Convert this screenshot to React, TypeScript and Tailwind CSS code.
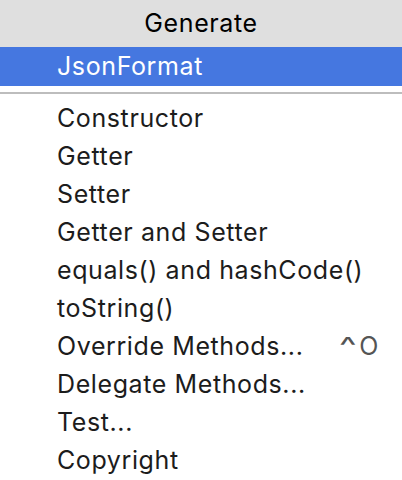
import React from "react";

const items: { label: string; shortcut?: boolean }[] = [
  { label: "Constructor" },
  { label: "Getter" },
  { label: "Setter" },
  { label: "Getter and Setter" },
  { label: "equals() and hashCode()" },
  { label: "toString()" },
  { label: "Override Methods...", shortcut: true },
  { label: "Delegate Methods..." },
  { label: "Test..." },
  { label: "Copyright" },
];

export default function App() {
  return (
    <div
      className="w-[402px] h-[480px] bg-white overflow-hidden text-[25px] tracking-[0.6px] text-[#1c1c1c]"
      style={{ fontFamily: "Inter, 'Liberation Sans', sans-serif" }}
    >
      <div className="h-[47px] bg-[#dfdfdf] flex items-center justify-center text-black">
        Generate
      </div>
      <div className="h-[39px] bg-[#4577e0] flex items-center pl-[57px] text-white">
        JsonFormat
      </div>
      <div className="h-[6px]" />
      <div className="h-[2px] bg-[#bdbdbd]" />
      <div className="flex flex-col pt-[6px]">
        {items.map((it) => (
          <div key={it.label} className="h-[38px] flex items-center pl-[57px] pr-[23px]">
            <span className="flex-1">{it.label}</span>
            {it.shortcut && (
              <span className="text-[#555] flex items-center">
                <span className="inline-block scale-x-150 mr-[5px]">^</span>
                <span>O</span>
              </span>
            )}
          </div>
        ))}
      </div>
    </div>
  );
}
